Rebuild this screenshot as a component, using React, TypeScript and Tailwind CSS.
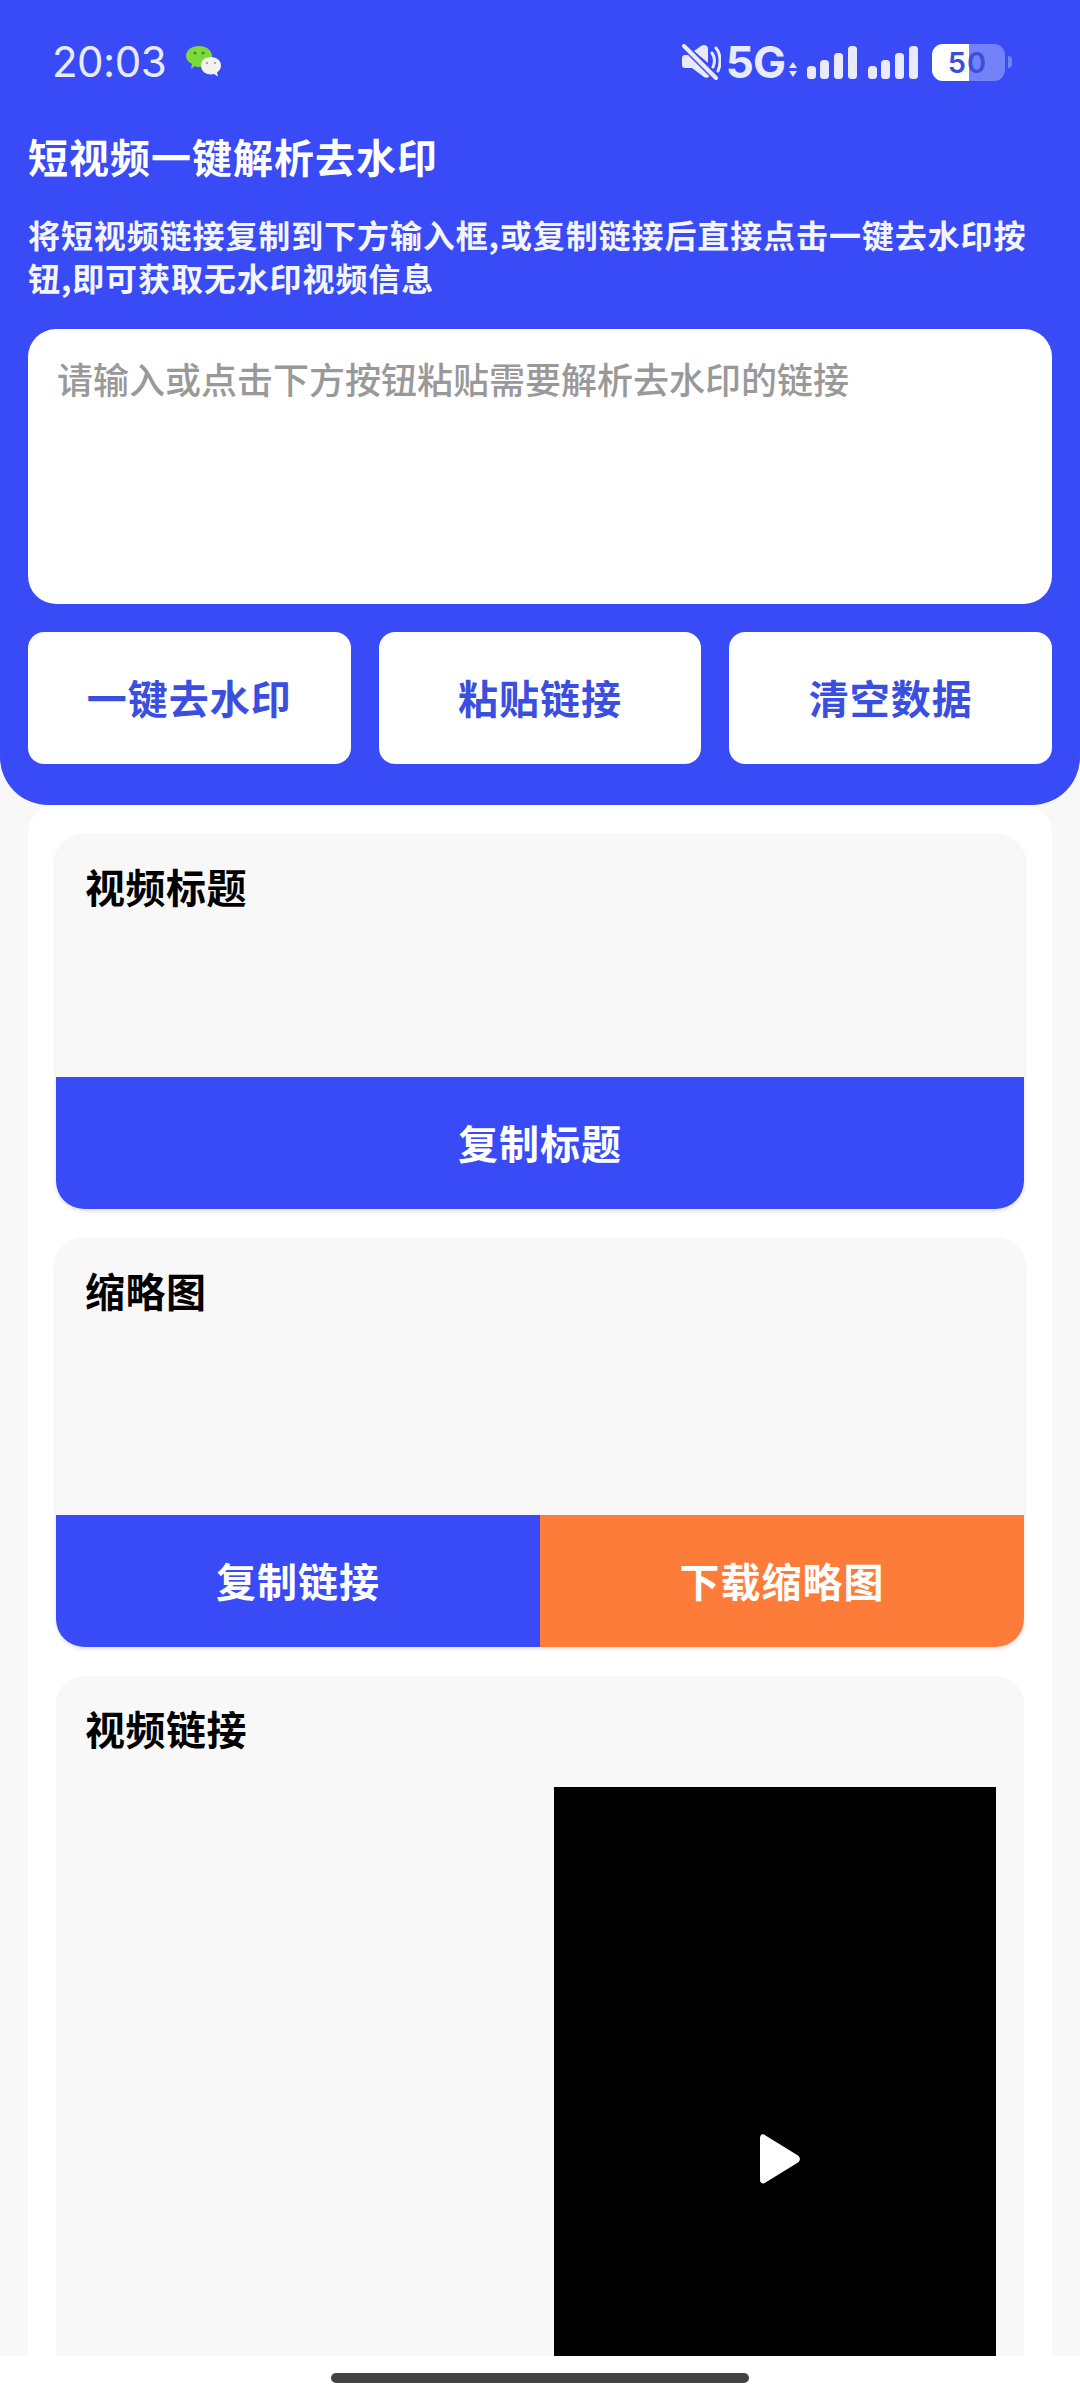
const cjk = "font-['Noto_Sans_CJK_SC','Noto_Sans',sans-serif]";

const SignalBars = () => (
  <svg width="50" height="33" viewBox="0 0 50 33" fill="#e9ebfd">
    <rect x="0" y="20" width="9" height="13" rx="3.5" />
    <rect x="13" y="14" width="9" height="19" rx="3.5" />
    <rect x="27" y="7" width="9" height="26" rx="3.5" />
    <rect x="41" y="0" width="9" height="33" rx="3.5" />
  </svg>
);

const MuteIcon = () => (
  <svg width="40" height="36" viewBox="0 0 40 36" fill="none">
    <path d="M1 14c0-2 1-3 3-3h4l2-2 20 20c-1 4-4 6-7 4l-12-9H4c-2 0-3-1-3-3z" fill="#e9ebfd" />
    <path d="M13 7l7-5c3-2 6-1 7 2v15z" fill="#e9ebfd" />
    <path d="M31 9c3 4 3 10 1 14M35 4c5 6 5 16 2 23" stroke="#e9ebfd" strokeWidth="3" strokeLinecap="round" />
    <path d="M3 2l32 32" stroke="#384bf6" strokeWidth="7" />
    <path d="M3 2l32 32" stroke="#e9ebfd" strokeWidth="4" strokeLinecap="round" />
  </svg>
);

const WeChatIcon = () => (
  <svg width="36" height="32" viewBox="0 0 36 32">
    <path d="M13 0c7 0 13 4 13 10 0 6-6 11-13 11-2 0-3 0-4-1l-4 3 1-5C2 16 0 13 0 10 0 4 6 0 13 0z" fill="#7ed93f" />
    <circle cx="9" cy="7" r="1.5" fill="#3f8a1c" />
    <circle cx="17" cy="7" r="1.5" fill="#3f8a1c" />
    <path d="M25 11c6 0 10 4 10 8.500 0 3-1.500 5-4 7l1 4-4-2.500c-1 .3-2 .5-3 .5-6 0-10-4-10-9s4-8.500 10-8.500z" fill="#f4f3ee" />
    <circle cx="21" cy="17" r="1.200" fill="#a9a9a0" />
    <circle cx="29" cy="17" r="1.200" fill="#a9a9a0" />
  </svg>
);

const StatusBar = () => (
  <div className="flex h-[123px] items-center justify-between pl-[52px] pr-[68px] pt-[1px] font-['Inter','Roboto',sans-serif] text-[#e9ebfd]">
    <div className="flex items-center gap-[20px]">
      <span className="text-[42px] leading-none tracking-[-0.5px]">20:03</span>
      <WeChatIcon />
    </div>
    <div className="flex items-center">
      <MuteIcon />
      <span className="ml-[5px] text-[44px] leading-none font-bold tracking-[-1px]">5G</span>
      <svg className="ml-[4px] mt-[14px]" width="8" height="15" viewBox="0 0 8 15" fill="#e9ebfd">
        <path d="M4 0l4 6H0zM4 15L0 9h8z" />
      </svg>
      <div className="ml-[10px] flex gap-[11px]">
        <SignalBars />
        <SignalBars />
      </div>
      <div className="relative ml-[14px] flex h-[37px] w-[73px] overflow-hidden rounded-[11px] bg-[#7482f9]">
        <div className="h-full w-[37px] bg-white" />
        <span className="absolute inset-0 flex items-center justify-center pr-[2px] text-[29px] leading-none font-semibold tracking-[1px] text-[#3c4fd8]">
          50
        </span>
      </div>
      <div className="ml-[3px] h-[12px] w-[4px] rounded-r-full bg-[#7482f9]" />
    </div>
  </div>
);

const Card = ({ title, bodyHeight, children }: { title: string; bodyHeight: string; children: React.ReactNode }) => (
  <div className="shrink-0 overflow-hidden rounded-[28px] bg-[#f8f8f8] shadow-[0_2px_4px_rgba(0,0,0,0.12)]">
    <div className={bodyHeight}>
      <div className="pl-[29px] pt-[29px] text-[40px] leading-[46px] font-bold tracking-[0.5px] text-black">{title}</div>
    </div>
    {children}
  </div>
);

const ActionButton = ({ label, className }: { label: string; className: string }) => (
  <div className={`flex h-[132px] flex-1 items-center justify-center pb-[3px] text-[40px] font-bold tracking-[1px] text-white ${className}`}>
    {label}
  </div>
);

export default function App() {
  return (
    <div className={`flex h-[2400px] w-[1080px] flex-col overflow-hidden bg-[#f8f8f8] ${cjk}`}>
      <header className="shrink-0 rounded-b-[48px] bg-[#384bf6] pb-[41px]">
        <StatusBar />
        <div className="px-[28px]">
          <h1 className="mt-[8px] text-[40px] leading-[50px] font-bold tracking-[1px] text-white">短视频一键解析去水印</h1>
          <p className="mt-[32px] text-[32px] leading-[43px] font-semibold tracking-[0.9px] text-[#f4f5ff]">
            将短视频链接复制到下方输入框,或复制链接后直接点击一键去水印按钮,即可获取无水印视频信息
          </p>
          <div className="mt-[30px] h-[275px] rounded-[28px] bg-white px-[29px] pt-[25px] text-[36px] leading-[48px] font-medium text-[#999999]">
            请输入或点击下方按钮粘贴需要解析去水印的链接
          </div>
          <div className="mt-[28px] grid grid-cols-3 gap-[28px]">
            {['一键去水印', '粘贴链接', '清空数据'].map((label) => (
              <div
                key={label}
                className="flex h-[132px] items-center justify-center rounded-[16px] bg-white pb-[3px] text-[40px] font-bold tracking-[1px] text-[#3a4fe0]"
              >
                {label}
              </div>
            ))}
          </div>
        </div>
      </header>

      <main className="mx-[28px] flex min-h-0 flex-1 flex-col gap-[29px] overflow-hidden rounded-t-[28px] bg-white px-[28px] pt-[29px]">
        <Card title="视频标题" bodyHeight="h-[243px]">
          <div className="flex">
            <ActionButton label="复制标题" className="bg-[#384bf6]" />
          </div>
        </Card>
        <Card title="缩略图" bodyHeight="h-[277px]">
          <div className="flex">
            <ActionButton label="复制链接" className="bg-[#384bf6]" />
            <ActionButton label="下载缩略图" className="bg-[#fd7c39]" />
          </div>
        </Card>
        <div className="shrink-0 rounded-t-[28px] bg-[#f8f8f8]">
          <div className="pl-[29px] pt-[29px] text-[40px] leading-[46px] font-bold tracking-[0.5px] text-black">视频链接</div>
          <div className="mr-[28px] ml-auto mt-[36px] flex h-[744px] w-[442px] items-center justify-center bg-black">
            <svg className="ml-[10px]" width="40" height="50" viewBox="0 0 40 50" fill="white">
              <path d="M0 4c0-3.500 3-5 5.500-2.500L38 21.500c2.500 2 2.500 5 0 7L5.500 48.500C3 50.500 0 49 0 46z" />
            </svg>
          </div>
        </div>
      </main>

      <div className="flex h-[44px] shrink-0 justify-center bg-white pt-[17px]">
        <div className="h-[10px] w-[418px] rounded-full bg-[#444444]" />
      </div>
    </div>
  );
}
